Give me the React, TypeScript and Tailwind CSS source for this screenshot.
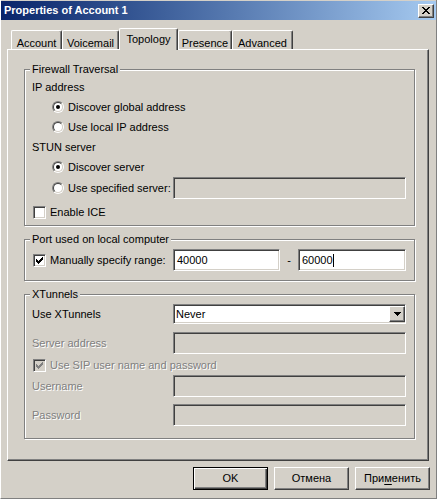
const sunken =
  "border border-t-[#808080] border-l-[#808080] border-b-white border-r-white shadow-[inset_1px_1px_0_#404040,inset_-1px_-1px_0_#d4d0c8]";
const raised =
  "border border-t-white border-l-white border-b-[#404040] border-r-[#404040] shadow-[inset_-1px_-1px_0_#808080]";
const etched = "border border-[#808080] shadow-[1px_1px_0_#fff,inset_1px_1px_0_#fff]";
const disabledText = "text-[#808080] [text-shadow:1px_1px_0_#fff]";

function Radio({ checked }: { checked?: boolean }) {
  return (
    <span className="flex w-[12px] h-[12px] shrink-0 rounded-full border border-t-[#808080] border-l-[#808080] border-b-white border-r-white">
      <span className="flex flex-1 items-center justify-center rounded-full border border-t-[#404040] border-l-[#404040] border-b-[#d4d0c8] border-r-[#d4d0c8] bg-white">
        {checked && <span className="w-[4px] h-[4px] rounded-full bg-black" />}
      </span>
    </span>
  );
}

function Check({ checked, disabled }: { checked?: boolean; disabled?: boolean }) {
  const fill = disabled ? "#808080" : "#000";
  return (
    <span
      className={`flex w-[13px] h-[13px] shrink-0 items-center justify-center ${sunken} ${
        disabled ? "bg-[#d4d0c8]" : "bg-white"
      }`}
    >
      {checked && (
        <svg width="7" height="7" viewBox="0 0 7 7" shapeRendering="crispEdges">
          <g fill={fill}>
            <rect x="6" y="0" width="1" height="1" />
            <rect x="5" y="1" width="2" height="1" />
            <rect x="0" y="2" width="1" height="1" />
            <rect x="4" y="2" width="3" height="1" />
            <rect x="0" y="3" width="2" height="1" />
            <rect x="3" y="3" width="3" height="1" />
            <rect x="0" y="4" width="5" height="1" />
            <rect x="1" y="5" width="3" height="1" />
            <rect x="2" y="6" width="1" height="1" />
          </g>
        </svg>
      )}
    </span>
  );
}

function Field({
  value,
  disabled,
  width = "w-[233px]",
  caret,
}: {
  value?: string;
  disabled?: boolean;
  width?: string;
  caret?: boolean;
}) {
  return (
    <div
      className={`${width} h-[22px] shrink-0 flex items-center pl-[3px] ${sunken} ${
        disabled ? "bg-[#d4d0c8]" : "bg-white"
      }`}
    >
      {value}
      {caret && <span className="w-[1px] h-[13px] bg-black" />}
    </div>
  );
}

function Group({ title, className, children }: { title: string; className: string; children: React.ReactNode }) {
  return (
    <div className={`ml-[16px] w-[391px] ${etched} ${className}`}>
      <div className="-mt-[7px] ml-[5px] w-fit px-[2px] h-[13px] leading-[13px] bg-[#d4d0c8]">{title}</div>
      {children}
    </div>
  );
}

function Tab({ label, width, active }: { label: string; width: string; active?: boolean }) {
  return (
    <div
      className={`${width} flex justify-center whitespace-nowrap rounded-t-[2px] border border-b-0 border-t-white border-l-white border-r-[#404040] shadow-[inset_-1px_0_0_#808080] bg-[#d4d0c8] ${
        active ? "h-[22px] -mb-[1px] relative z-10 pt-[2px]" : "h-[19px] pt-[4px]"
      }`}
    >
      {label}
    </div>
  );
}

function Button({ children, isDefault }: { children: React.ReactNode; isDefault?: boolean }) {
  return (
    <button
      className={`w-[75px] h-[23px] flex items-center justify-center ${
        isDefault
          ? "border border-black shadow-[inset_1px_1px_0_#fff,inset_-1px_-1px_0_#404040,inset_-2px_-2px_0_#808080]"
          : raised
      }`}
    >
      {children}
    </button>
  );
}

export default function App() {
  return (
    <div className="w-[437px] h-[499px] flex flex-col overflow-hidden whitespace-nowrap bg-[#d4d0c8] text-black text-[11px] font-['Liberation_Sans',Arial,sans-serif] border-l border-l-white border-r border-r-[#808080] border-b border-b-[#808080] select-none">
      {/* Title bar */}
      <div className="mt-[1px] h-[19px] shrink-0 flex items-center pl-[3px] pr-[2px] bg-linear-to-r from-[#0a246a] to-[#a6caf0]">
        <span className="font-bold text-white">Properties of Account 1</span>
        <div className={`ml-auto w-[16px] h-[14px] flex items-center justify-center bg-[#d4d0c8] ${raised}`}>
          <svg width="8" height="7" viewBox="0 0 8 7" shapeRendering="crispEdges">
            <g fill="#000">
              <rect x="0" y="0" width="2" height="1" />
              <rect x="6" y="0" width="2" height="1" />
              <rect x="1" y="1" width="2" height="1" />
              <rect x="5" y="1" width="2" height="1" />
              <rect x="2" y="2" width="4" height="1" />
              <rect x="3" y="3" width="2" height="1" />
              <rect x="2" y="4" width="4" height="1" />
              <rect x="1" y="5" width="2" height="1" />
              <rect x="5" y="5" width="2" height="1" />
              <rect x="0" y="6" width="2" height="1" />
              <rect x="6" y="6" width="2" height="1" />
            </g>
          </svg>
        </div>
      </div>

      {/* Tabs */}
      <div className="mt-[8px] h-[21px] shrink-0 flex items-end pl-[10px]">
        <Tab label="Account" width="w-[51px]" />
        <Tab label="Voicemail" width="w-[57px]" />
        <Tab label="Topology" width="w-[59px]" active />
        <Tab label="Presence" width="w-[54px]" />
        <Tab label="Advanced" width="w-[61px]" />
      </div>

      {/* Panel */}
      <div className={`ml-[6px] w-[422px] h-[412px] shrink-0 flex flex-col ${raised}`}>
        <Group title="Firewall Traversal" className="mt-[19px] pb-[3px]">
          <div className="mt-[1px] h-[20px] flex items-center pl-[7px]">IP address</div>
          <div className="h-[20px] flex items-center gap-[4px] pl-[27px]">
            <Radio checked />
            Discover global address
          </div>
          <div className="h-[20px] flex items-center gap-[4px] pl-[27px]">
            <Radio />
            Use local IP address
          </div>
          <div className="h-[20px] flex items-center pl-[7px]">STUN server</div>
          <div className="h-[20px] flex items-center gap-[4px] pl-[27px]">
            <Radio checked />
            Discover server
          </div>
          <div className="h-[22px] flex items-center pl-[27px]">
            <Radio />
            <span className="ml-[4px]">Use specified server:</span>
            <div className="ml-auto mr-[8px]">
              <Field disabled />
            </div>
          </div>
          <div className="mt-[3px] h-[20px] flex items-center gap-[4px] pl-[8px]">
            <Check />
            Enable ICE
          </div>
        </Group>

        <Group title="Port used on local computer" className="mt-[13px] pb-[9px]">
          <div className="mt-[3px] h-[22px] flex items-center gap-[4px] pl-[8px]">
            <Check checked />
            Manually specify range:
            <div className="ml-auto mr-[8px] flex items-center">
              <Field value="40000" width="w-[107px]" />
              <span className="w-[18px] text-center">-</span>
              <Field value="60000" width="w-[108px]" caret />
            </div>
          </div>
        </Group>

        <Group title="XTunnels" className="mt-[13px] pb-[12px]">
          <div className="mt-[3px] h-[20px] flex items-center pl-[7px]">
            Use XTunnels
            <div className={`ml-auto mr-[8px] w-[233px] h-[20px] flex items-center bg-white ${sunken}`}>
              <span className="pl-[2px]">Never</span>
              <div className={`ml-auto w-[16px] h-[16px] flex items-center justify-center bg-[#d4d0c8] ${raised}`}>
                <svg width="7" height="4" viewBox="0 0 7 4" shapeRendering="crispEdges">
                  <g fill="#000">
                    <rect x="0" y="0" width="7" height="1" />
                    <rect x="1" y="1" width="5" height="1" />
                    <rect x="2" y="2" width="3" height="1" />
                    <rect x="3" y="3" width="1" height="1" />
                  </g>
                </svg>
              </div>
            </div>
          </div>
          <div className="mt-[8px] h-[22px] flex items-center pl-[7px]">
            <span className={disabledText}>Server address</span>
            <div className="ml-auto mr-[8px]">
              <Field disabled />
            </div>
          </div>
          <div className="mt-[1px] h-[20px] flex items-center gap-[4px] pl-[8px]">
            <Check checked disabled />
            <span className={disabledText}>Use SIP user name and password</span>
          </div>
          <div className="h-[22px] flex items-center pl-[7px]">
            <span className={disabledText}>Username</span>
            <div className="ml-auto mr-[8px]">
              <Field disabled />
            </div>
          </div>
          <div className="mt-[7px] h-[22px] flex items-center pl-[7px]">
            <span className={disabledText}>Password</span>
            <div className="ml-auto mr-[8px]">
              <Field disabled />
            </div>
          </div>
        </Group>
      </div>

      {/* Buttons */}
      <div className="mt-[6px] h-[23px] shrink-0 flex justify-end gap-[6px] pr-[6px]">
        <Button isDefault>OK</Button>
        <Button>Отмена</Button>
        <Button>
          <span>
            При<span className="underline underline-offset-2">м</span>енить
          </span>
        </Button>
      </div>
    </div>
  );
}
